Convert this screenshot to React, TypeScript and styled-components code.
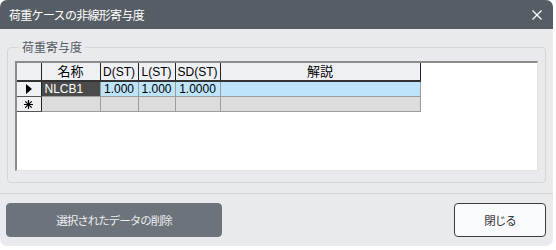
import React from "react";
import styled, { createGlobalStyle } from "styled-components";

const Global = createGlobalStyle`
  html, body { margin: 0; padding: 0; background: #ffffff; }
  body { font-family: "Liberation Sans", "Noto Sans CJK JP", sans-serif; }
`;

const Window = styled.div`
  width: 553px;
  height: 246px;
  border-radius: 7px;
  overflow: hidden;
  background: #e9eaee;
  display: flex;
  flex-direction: column;
`;

const TitleBar = styled.div`
  height: 29px;
  flex: none;
  background: #575d64;
  color: #ffffff;
  display: flex;
  align-items: center;
  justify-content: space-between;
  padding: 0 11px 0 9px;
  font-family: "Noto Sans CJK JP", sans-serif;
  font-size: 12px;
  letter-spacing: -0.7px;
`;

const Body = styled.div`
  flex: 1;
  display: flex;
  flex-direction: column;
  padding: 9px 7px 9px 7px;
`;

const Group = styled.fieldset`
  margin: 0;
  padding: 5px 7px 11px 7px;
  border: 1px solid #d4d5d9;
  border-radius: 4px;
  min-width: 0;
`;

const Legend = styled.legend`
  padding: 0 3px;
  margin-left: 4px;
  font-family: "Noto Sans CJK JP", sans-serif;
  font-size: 12px;
  line-height: 18px;
  color: #555a60;
`;

const GridArea = styled.div`
  height: 110px;
  background: #ffffff;
  border-top: 2px solid #8c8c8c;
  border-left: 2px solid #8c8c8c;
  border-right: 1px solid #e2e2e2;
  border-bottom: 1px solid #e2e2e2;
  box-sizing: border-box;
`;

const Table = styled.table`
  border-collapse: collapse;
  table-layout: fixed;
  font-size: 12px;
  width: 403px;
`;

const Col = styled.col<{ $w: number }>`
  width: ${(p) => p.$w}px;
`;

const HeadCell = styled.th`
  box-sizing: border-box;
  height: 17px;
  padding: 0;
  background: #eff0f4;
  border-right: 1px solid #222;
  border-bottom: 2px solid #333;
  font-weight: normal;
  text-align: center;
  color: #000;
  white-space: nowrap;
  line-height: 16px;
  font-family: "Liberation Sans", "Noto Sans CJK JP", sans-serif;
  font-size: 12px;
`;

const CjkLabel = styled.span`
  font-family: "Noto Sans CJK JP", sans-serif;
  font-size: 13px;
  line-height: 16px;
`;

const RowHead = styled.td`
  box-sizing: border-box;
  height: 15px;
  padding: 0;
  background: #eff0f4;
  border-right: 1px solid #222;
  border-bottom: 1px solid #555;
  text-align: center;
  line-height: 12px;
`;

const Cell = styled.td<{ $bg: string; $fg?: string; $align?: string }>`
  box-sizing: border-box;
  height: 15px;
  padding: 0 3px;
  background: ${(p) => p.$bg};
  color: ${(p) => p.$fg || "#000"};
  border-right: 1px solid #9c9c9c;
  border-bottom: 1px solid #9c9c9c;
  text-align: ${(p) => p.$align || "left"};
  white-space: nowrap;
`;

const Separator = styled.div`
  height: 1px;
  background: #d2d3d7;
  margin: 10px -7px 9px -7px;
`;

const Footer = styled.div`
  display: flex;
  justify-content: space-between;
  margin-left: -1px;
`;

const Button = styled.button<{ $primary?: boolean }>`
  height: 34px;
  width: ${(p) => (p.$primary ? 216 : 92)}px;
  border-radius: 4px;
  border: 1px solid ${(p) => (p.$primary ? "#6c737a" : "#3c3c3c")};
  background: ${(p) => (p.$primary ? "#6c737a" : "#f9fafc")};
  color: ${(p) => (p.$primary ? "#eceef0" : "#333")};
  font-family: "Noto Sans CJK JP", sans-serif;
  font-size: 11.5px;
  letter-spacing: -1px;
  padding: 0;
`;

const Triangle = () => (
  <svg width="7" height="10" viewBox="0 0 7 10" style={{ display: "block", margin: "0 auto" }}>
    <path d="M1 0 L7 5 L1 10 Z" fill="#000" />
  </svg>
);

const Star = () => (
  <svg width="9" height="9" viewBox="0 0 9 9" style={{ display: "block", margin: "0 auto" }}>
    <g stroke="#000" strokeWidth="1.2">
      <line x1="4.5" y1="0" x2="4.5" y2="9" />
      <line x1="0" y1="4.5" x2="9" y2="4.5" />
      <line x1="1.3" y1="1.3" x2="7.7" y2="7.7" />
      <line x1="7.7" y1="1.3" x2="1.3" y2="7.7" />
    </g>
  </svg>
);

const CloseIcon = () => (
  <svg width="10" height="10" viewBox="0 0 10 10">
    <g stroke="#ffffff" strokeWidth="1.2">
      <line x1="0.5" y1="0.5" x2="9.5" y2="9.5" />
      <line x1="9.5" y1="0.5" x2="0.5" y2="9.5" />
    </g>
  </svg>
);

const columns: { label: string; w: number; cjk?: boolean }[] = [
  { label: "", w: 24 },
  { label: "名称", w: 59, cjk: true },
  { label: "D(ST)", w: 38 },
  { label: "L(ST)", w: 37 },
  { label: "SD(ST)", w: 45 },
  { label: "解説", w: 200, cjk: true },
];

export default function App() {
  return (
    <>
      <Global />
      <Window>
        <TitleBar>
          <span>荷重ケースの非線形寄与度</span>
          <CloseIcon />
        </TitleBar>
        <Body>
          <Group>
            <Legend>荷重寄与度</Legend>
            <GridArea>
              <Table>
                <colgroup>
                  {columns.map((c, i) => (
                    <Col key={i} $w={c.w} />
                  ))}
                </colgroup>
                <thead>
                  <tr>
                    {columns.map((c, i) => (
                      <HeadCell key={i}>
                        {c.cjk ? <CjkLabel>{c.label}</CjkLabel> : c.label}
                      </HeadCell>
                    ))}
                  </tr>
                </thead>
                <tbody>
                  <tr>
                    <RowHead><Triangle /></RowHead>
                    <Cell $bg="#4b4b4b" $fg="#ffffff">NLCB1</Cell>
                    <Cell $bg="#bde4fb" $align="center">1.000</Cell>
                    <Cell $bg="#bde4fb" $align="center">1.000</Cell>
                    <Cell $bg="#bde4fb" $align="center">1.0000</Cell>
                    <Cell $bg="#bde4fb"></Cell>
                  </tr>
                  <tr>
                    <RowHead><Star /></RowHead>
                    <Cell $bg="#dddddd"></Cell>
                    <Cell $bg="#dddddd"></Cell>
                    <Cell $bg="#dddddd"></Cell>
                    <Cell $bg="#dddddd"></Cell>
                    <Cell $bg="#dddddd"></Cell>
                  </tr>
                </tbody>
              </Table>
            </GridArea>
          </Group>
          <Separator />
          <Footer>
            <Button $primary>選択されたデータの削除</Button>
            <Button>閉じる</Button>
          </Footer>
        </Body>
      </Window>
    </>
  );
}
